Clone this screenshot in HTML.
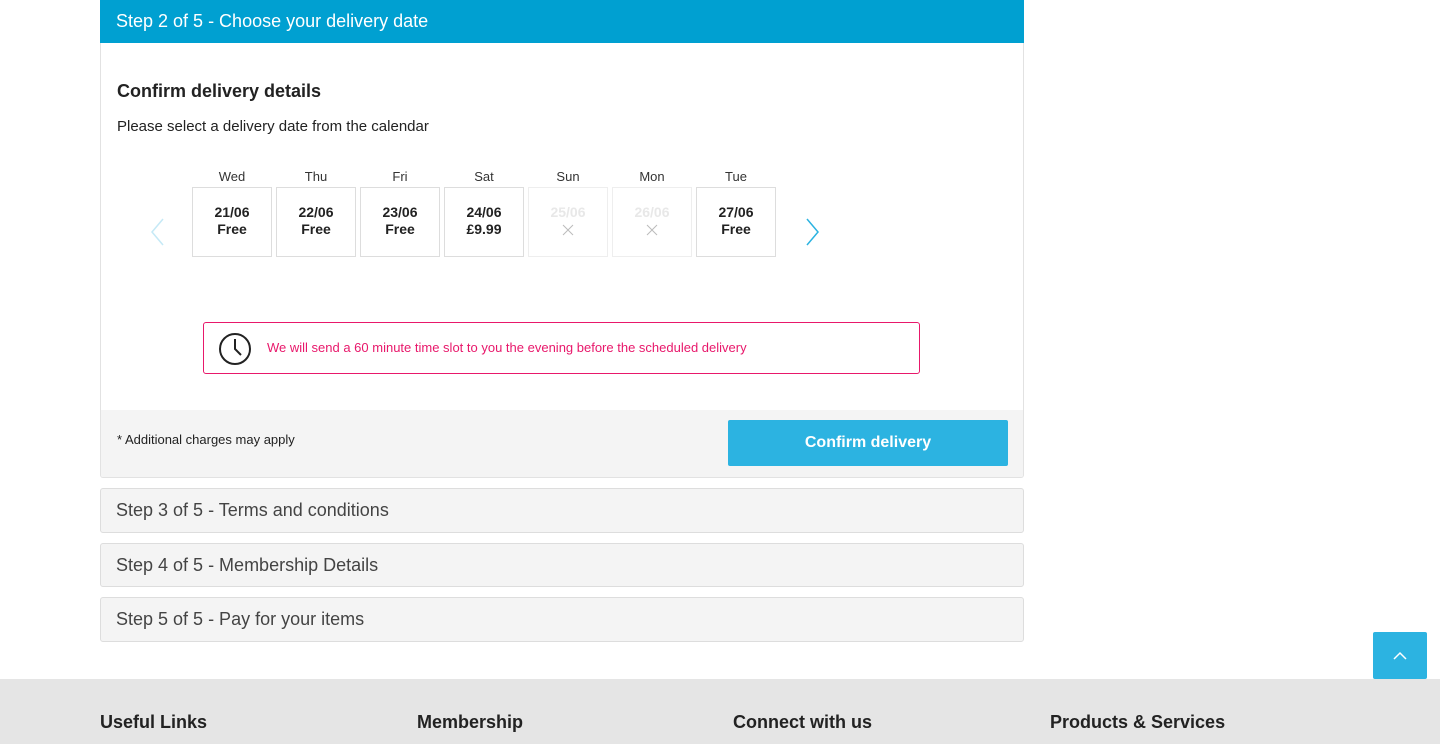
<!DOCTYPE html>
<html><head><style>
*{box-sizing:border-box;margin:0;padding:0}
body{width:1440px;height:744px;overflow:hidden;background:#fff;font-family:"Liberation Sans",sans-serif;color:#222;position:relative}
.card{position:absolute;left:100px;width:924px;border:1px solid #ddd;border-radius:3px;background:#f4f4f4}
.hd{position:absolute;left:100px;top:0;width:924px;height:43px;background:#00a0d1;color:#fff;font-size:18px;padding:11px 16px}
.main{position:absolute;left:100px;top:43px;width:924px;height:435px;border:1px solid #e2e2e2;border-top:none;background:#fff;border-radius:0 0 3px 3px;overflow:hidden}
.day{position:absolute;top:169px;width:80px;text-align:center;font-size:13px;color:#333}
.box{position:absolute;top:187px;width:80px;height:70px;border:1px solid #ddd;text-align:center;font-weight:bold;font-size:14px;padding-top:16px;line-height:17px;color:#222}
.dis{color:#e8e8e8;border-color:#eee}
.dis svg{display:block;margin:3px auto 0}
.step{font-size:18px;color:#444;padding:11px 15px;height:45px}
.ft{position:absolute;top:679px;left:0;width:1440px;height:65px;background:#e5e5e5}
.ft div{position:absolute;top:33px;font-size:18px;font-weight:bold;color:#222}
</style></head><body>
<div class="hd">Step 2 of 5 - Choose your delivery date</div>
<div class="main">
<div style="position:absolute;left:16px;top:38px;font-size:18px;font-weight:bold">Confirm delivery details</div>
<div style="position:absolute;left:16px;top:75px;font-size:15px">Please select a delivery date from the calendar</div>
<div style="position:absolute;left:0;top:367px;width:924px;height:68px;background:#f4f4f4">
<div style="position:absolute;left:16px;top:22px;font-size:13px">* Additional charges may apply</div>
<div style="position:absolute;left:627px;top:10px;width:280px;height:46px;background:#2cb3e1;color:#fff;font-weight:bold;font-size:16px;text-align:center;line-height:46px;border-radius:2px">Confirm delivery</div>
</div>
</div>
<div class="day" style="left:192px">Wed</div><div class="day" style="left:276px">Thu</div><div class="day" style="left:360px">Fri</div><div class="day" style="left:444px">Sat</div><div class="day" style="left:528px">Sun</div><div class="day" style="left:612px">Mon</div><div class="day" style="left:696px">Tue</div>
<div class="box" style="left:192px">21/06<br>Free</div>
<div class="box" style="left:276px">22/06<br>Free</div>
<div class="box" style="left:360px">23/06<br>Free</div>
<div class="box" style="left:444px">24/06<br>£9.99</div>
<div class="box dis" style="left:528px">25/06<svg width="12" height="12"><path d="M1 1L11 11M11 1L1 11" stroke="#bbb" stroke-width="1"/></svg></div>
<div class="box dis" style="left:612px">26/06<svg width="12" height="12"><path d="M1 1L11 11M11 1L1 11" stroke="#bbb" stroke-width="1"/></svg></div>
<div class="box" style="left:696px">27/06<br>Free</div>
<svg style="position:absolute;left:148px;top:217px" width="18" height="30"><path d="M15 2 L4 15 L15 28" fill="none" stroke="#c5e9f6" stroke-width="1.5"/></svg>
<svg style="position:absolute;left:804px;top:217px" width="18" height="30"><path d="M3 2 L14 15 L3 28" fill="none" stroke="#2cb3e1" stroke-width="1.5"/></svg>
<div style="position:absolute;left:203px;top:322px;width:717px;height:52px;border:1px solid #e8186b;border-radius:3px">
<svg style="position:absolute;left:14px;top:9px" width="34" height="34"><circle cx="17" cy="17" r="15" fill="none" stroke="#222" stroke-width="2"/><path d="M17 7 V17 L23 23" fill="none" stroke="#222" stroke-width="2"/></svg>
<div style="position:absolute;left:63px;top:17px;font-size:13px;color:#e8186b">We will send a 60 minute time slot to you the evening before the scheduled delivery</div>
</div>
<div class="card step" style="top:488px">Step 3 of 5 - Terms and conditions</div>
<div class="card step" style="top:543px;height:44px">Step 4 of 5 - Membership Details</div>
<div class="card step" style="top:597px">Step 5 of 5 - Pay for your items</div>
<div style="position:absolute;left:1373px;top:632px;width:54px;height:47px;background:#2cb3e1;border-radius:2px"><svg width="54" height="47"><path d="M21 27 L27 21 L33 27" fill="none" stroke="#fff" stroke-width="1.5"/></svg></div>
<div class="ft"><div style="left:100px">Useful Links</div><div style="left:417px">Membership</div><div style="left:733px">Connect with us</div><div style="left:1050px">Products &amp; Services</div></div>
</body></html>
